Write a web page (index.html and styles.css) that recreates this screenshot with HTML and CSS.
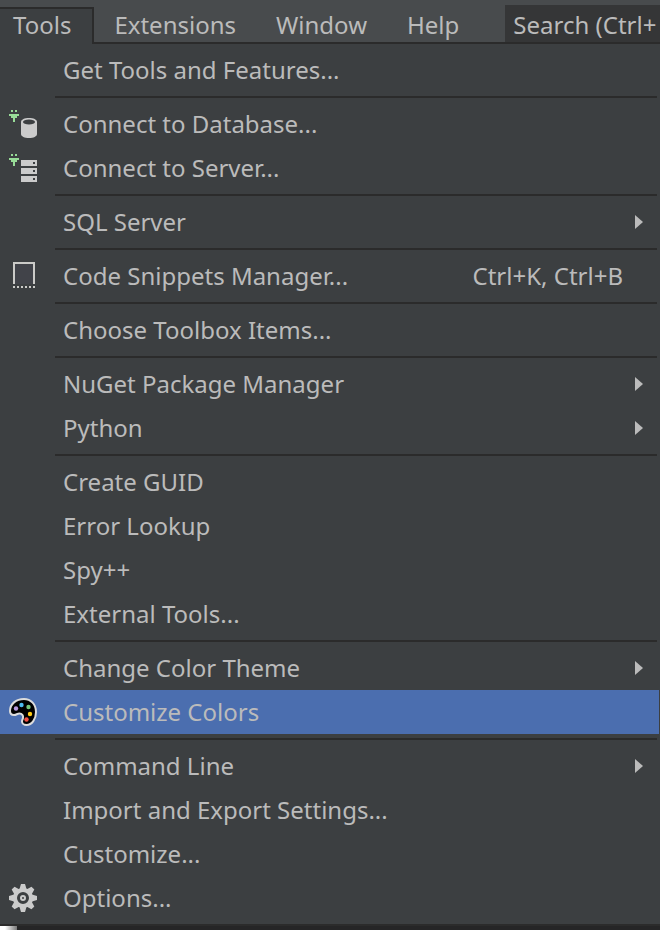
FILE: index.html
```
<!DOCTYPE html>
<html lang="en">
<head>
    <meta charset="UTF-8">
    <meta name="viewport" content="width=device-width, initial-scale=1.0">
    <title>Tools</title>
    <link rel="stylesheet" href="styles.css">
</head>
<body>
    <header class="menubar">
        <nav class="tabs">
            <button class="tab active">Tools</button>
            <button class="tab">Extensions</button>
            <button class="tab">Window</button>
            <button class="tab">Help</button>
        </nav>
        <input class="search" type="text" aria-label="Search" placeholder="Search (Ctrl+">
    </header>
    <main class="menu">
        <button class="item"><span class="label">Get Tools and Features...</span></button>
        <hr>
        <button class="item">
            <!-- plug and database -->
            <svg class="icon" width="32" height="32" viewBox="0 0 32 32">
                <path fill="#98dc98" d="M4 2h2v2H4zM8 2h2v2H8zM2 6h10v2h-2v2H8v4H6v-4H4V8H2z"/>
                <path fill="#cbcbcb" d="M14 14c0-2.500 3.500-4 8-4s8 1.500 8 4v12c0 2.500-3.500 4-8 4s-8-1.500-8-4z"/>
                <ellipse cx="22" cy="14" rx="6" ry="2.500" fill="#3c3f41"/>
            </svg>
            <span class="label">Connect to Database...</span>
        </button>
        <button class="item">
            <!-- plug and server rack -->
            <svg class="icon" width="32" height="32" viewBox="0 0 32 32">
                <path fill="#98dc98" d="M4 2h2v2H4zM8 2h2v2H8zM2 6h10v2h-2v2H8v4H6v-4H4V8H2z"/>
                <path fill="#cbcbcb" d="M14 8h16v6H14zM14 16h16v6H14zM14 24h16v6H14z"/>
                <path fill="#3c3f41" d="M26 10h2v2h-2zM26 18h2v2h-2zM26 26h2v2h-2z"/>
            </svg>
            <span class="label">Connect to Server...</span>
        </button>
        <hr>
        <button class="item"><span class="label">SQL Server</span><span class="arrow"></span></button>
        <hr>
        <button class="item">
            <svg class="icon" width="32" height="32" viewBox="0 0 32 32">
                <path fill="#414349" d="M8 4h18v20H8z"/>
                <path fill="none" stroke="#cbcbc8" stroke-width="2" d="M7 24V3h20v21"/>
                <path stroke="#cbcbc8" stroke-width="2" stroke-dasharray="2 2" d="M6 27h22"/>
            </svg>
            <span class="label">Code Snippets Manager...</span>
            <span class="shortcut">Ctrl+K, Ctrl+B</span>
        </button>
        <hr>
        <button class="item"><span class="label">Choose Toolbox Items...</span></button>
        <hr>
        <button class="item"><span class="label">NuGet Package Manager</span><span class="arrow"></span></button>
        <button class="item"><span class="label">Python</span><span class="arrow"></span></button>
        <hr>
        <button class="item"><span class="label">Create GUID</span></button>
        <button class="item"><span class="label">Error Lookup</span></button>
        <button class="item"><span class="label">Spy++</span></button>
        <button class="item"><span class="label">External Tools...</span></button>
        <hr>
        <button class="item"><span class="label">Change Color Theme</span><span class="arrow"></span></button>
        <button class="item selected">
            <!-- palette -->
            <svg class="icon" width="32" height="32" viewBox="0 0 32 32">
                <path fill="#000" stroke="#dcdcdc" stroke-width="2" d="M17 3C9 3 3 8 3 15c0 2.500 1.500 4 4 4 2.500 0 3-1.500 5.500-1.500 2.500 0 4 2 3.500 4.500-.3 1.500-1 2-1 3.500 0 2 2 3.500 4.500 3.500C25 29 29 23 29 16 29 8.500 24 3 17 3z"/>
                <circle cx="9" cy="12.500" r="2.200" fill="#b89ae0"/>
                <circle cx="14.500" cy="9" r="2.200" fill="#4ebbf0"/>
                <circle cx="21.500" cy="11" r="2.200" fill="#76c67a"/>
                <circle cx="23" cy="18" r="2.200" fill="#ffcc16"/>
                <circle cx="19.500" cy="23.500" r="2.200" fill="#f65044"/>
            </svg>
            <span class="label">Customize Colors</span>
        </button>
        <hr>
        <button class="item"><span class="label">Command Line</span><span class="arrow"></span></button>
        <button class="item"><span class="label">Import and Export Settings...</span></button>
        <button class="item"><span class="label">Customize...</span></button>
        <button class="item">
            <!-- gear -->
            <svg class="icon" width="32" height="32" viewBox="0 0 32 32">
                <g fill="#cbcbcb" transform="translate(16 16)">
                    <path id="teeth" d="M-3.500-9l1.500-5h4l1.500 5v18l-1.500 5h-4l-1.500-5z"/>
                    <use href="#teeth" transform="rotate(45)"/>
                    <use href="#teeth" transform="rotate(90)"/>
                    <use href="#teeth" transform="rotate(135)"/>
                    <circle r="10"/>
                </g>
                <circle cx="16" cy="16" r="4.500" fill="#cbcbcb" stroke="#3c3f41" stroke-width="3"/>
                <circle cx="16" cy="16" r="1" fill="#3c3f41"/>
            </svg>
            <span class="label">Options...</span>
        </button>
    </main>
    <footer class="strip"></footer>
</body>
</html>
```
FILE: styles.css
```
* {
    box-sizing: border-box;
}
body {
    margin: 0;
    background: #252526;
    color: #bbbbbb;
    font-family: "Noto Sans", "Open Sans", sans-serif;
    font-size: 24px;
    line-height: 32px;
    overflow: hidden;
}
button, input {
    font: inherit;
    color: inherit;
    border: none;
    border-radius: 0;
    margin: 0;
    padding: 0;
    background: none;
}
.menubar {
    display: flex;
    align-items: flex-end;
    height: 44px;
    background: linear-gradient(#2b2b2b, #2b2b2b) bottom / 100% 2px no-repeat #484b4d;
}
.tabs {
    display: flex;
    flex: none;
}
.tab {
    height: 37px;
    padding: 0 20px 2px;
}
.tab.active {
    padding: 0 21px 4px 13px;
    border-top: 2px solid #2b2b2b;
    border-right: 2px solid #2b2b2b;
    background: #3c3f41;
}
.search {
    flex: 1;
    min-width: 0;
    height: 37px;
    margin: 0 0 2px 26px;
    padding: 2px 0 0 8px;
    background: #353637;
    outline: none;
}
.search::placeholder {
    color: #bbbbbb;
    opacity: 1;
}
.menu {
    display: flex;
    flex-direction: column;
    padding: 4px 1px 4px 0;
    background: #3c3f41;
    border-bottom: 2px solid #2b2b2b;
}
.item {
    display: grid;
    grid-template-columns: 63px 1fr auto;
    align-items: center;
    height: 44px;
    text-align: left;
}
.item.selected {
    background: #4b6eaf;
}
.icon {
    grid-column: 1;
    margin-left: 7px;
}
.label {
    grid-column: 2;
}
.shortcut {
    margin-right: 36px;
}
.arrow {
    width: 8px;
    height: 14px;
    margin-right: 16px;
    background: #bbbbbb;
    clip-path: polygon(0 0, 100% 50%, 0 100%);
}
hr {
    width: auto;
    height: 2px;
    margin: 4px 2px 4px 55px;
    border: none;
    background: #2b2b2b;
}
.strip {
    height: 4px;
    background: linear-gradient(90deg, #ffffff 5px, #777777 17px, #252526 17px);
}
```
